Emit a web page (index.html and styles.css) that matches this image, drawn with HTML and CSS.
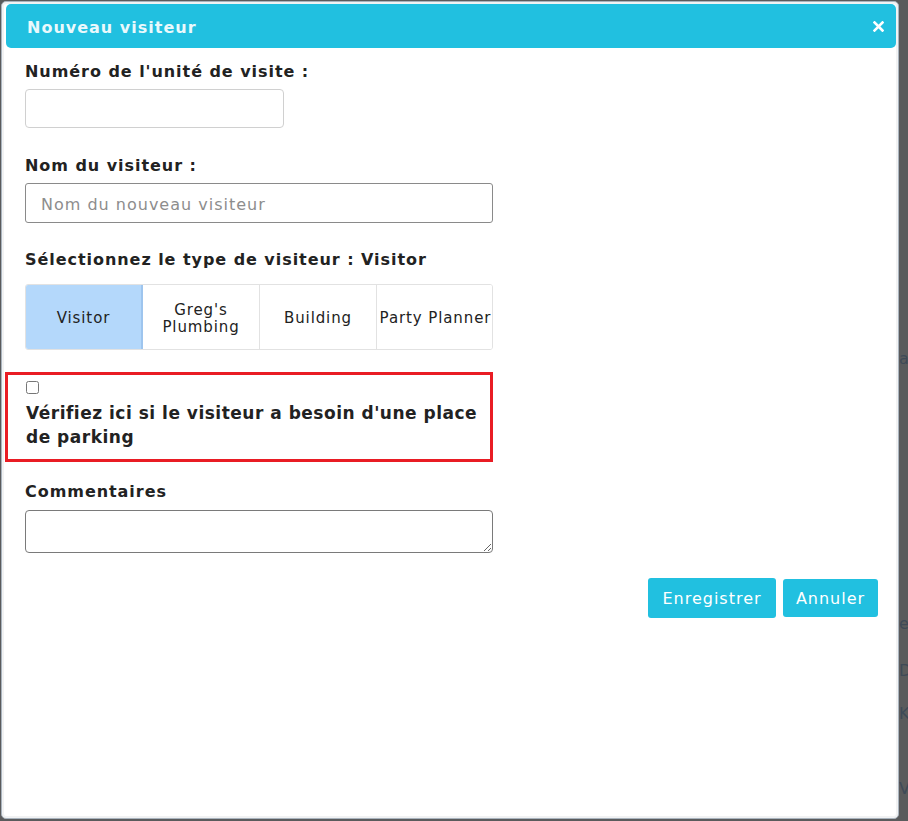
FILE: index.html
```html
<!DOCTYPE html>
<html lang="fr">
<head>
<meta charset="utf-8">
<title>Nouveau visiteur</title>
<link rel="stylesheet" href="styles.css">
</head>
<body>
<div class="page">
  <div class="dialog">
    <div class="dialog-header">
      <span class="dialog-title">Nouveau visiteur</span>
      <span class="close" aria-label="Fermer">
        <svg width="11" height="11" viewBox="0 0 11 11"><path d="M1.5 1.5 L9.5 9.5 M9.5 1.5 L1.5 9.5" stroke="#fff" stroke-width="2.6" stroke-linecap="square"/></svg>
      </span>
    </div>
    <div class="dialog-body">
      <label class="field-label label-first">Numéro de l'unité de visite :</label>
      <input class="input input-short" type="text">

      <label class="field-label label-gap">Nom du visiteur :</label>
      <input class="input input-long" type="text" placeholder="Nom du nouveau visiteur">

      <label class="field-label label-type">Sélectionnez le type de visiteur : Visitor</label>
      <div class="segments">
        <div class="segment active">Visitor</div>
        <div class="segment two-line">Greg's<br>Plumbing</div>
        <div class="segment">Building</div>
        <div class="segment">Party Planner</div>
      </div>

      <div class="highlight">
        <input class="check" type="checkbox">
        <div class="check-label">Vérifiez ici si le visiteur a besoin d'une place de parking</div>
      </div>

      <label class="field-label label-comments">Commentaires</label>
      <textarea class="textarea"></textarea>

      <div class="actions">
        <button class="btn btn-save">Enregistrer</button>
        <button class="btn btn-cancel">Annuler</button>
      </div>
    </div>
  </div>
  <div class="gutter">
    <span class="ghost g1">a</span>
    <span class="ghost g2">e</span>
    <span class="ghost g3">D</span>
    <span class="ghost g4">K</span>
    <span class="ghost g5">Va</span>
  </div>
</div>
</body>
</html>
```
FILE: styles.css
```css
html, body {
  margin: 0;
  padding: 0;
  background: #5a5b5c;
  height: 100%;
  overflow: hidden;
}

.page {
  display: flex;
  align-items: flex-start;
  padding: 1px 0 0 1px;
  font-family: "DejaVu Sans", Verdana, sans-serif;
}

.dialog {
  box-sizing: border-box;
  width: 898px;
  height: 818px;
  background: #fff;
  border: 1px solid #a9b3bd;
  border-radius: 5px;
  box-shadow: inset 0 0 0 2px #f1f2f3;
  padding: 2px 2px 3px 4px;
  flex: none;
}

.dialog-header {
  height: 44px;
  background: #21c0e0;
  border-radius: 5px;
  display: flex;
  align-items: center;
  justify-content: space-between;
  padding: 0 12px 0 21px;
}

.dialog-title {
  color: #eaf9fc;
  font-weight: bold;
  font-size: 16px;
  letter-spacing: 1px;
  margin-top: 2px;
}

.close {
  display: flex;
  margin-top: 1px;
}

.dialog-body {
  padding: 0 18px 0 19px;
  display: flex;
  flex-direction: column;
  align-items: flex-start;
  color: #222;
}

.field-label {
  display: block;
  font-weight: bold;
  font-size: 16px;
  line-height: 22px;
  letter-spacing: 0.95px;
  color: #222;
}

.label-first { margin-top: 13px; }
.label-gap { margin-top: 27px; }
.label-type { margin-top: 26px; }

.input {
  box-sizing: border-box;
  margin-top: 7px;
  font-family: "DejaVu Sans", Verdana, sans-serif;
  font-size: 16px;
  letter-spacing: 1px;
  padding: 0 15px;
  border-radius: 4px;
  background: #fff;
  outline: none;
}

.input-short {
  width: 259px;
  height: 39px;
  margin-top: 6px;
  border: 1px solid #d0d0d0;
}

.input-long {
  width: 468px;
  height: 40px;
  margin-top: 6px;
  padding-top: 2px;
  border: 1px solid #8a8a8a;
  border-radius: 3px;
}

.input-long::placeholder {
  color: #8d8d8d;
}

.segments {
  margin-top: 13px;
  display: grid;
  grid-template-columns: 117px 116px 117px 118px;
  width: 468px;
  height: 66px;
  box-sizing: border-box;
  border: 1px solid #e2e2e2;
  border-radius: 3px;
  overflow: hidden;
}

.segment {
  display: flex;
  align-items: center;
  justify-content: center;
  text-align: center;
  font-size: 15px;
  letter-spacing: 0.9px;
  line-height: 17px;
  color: #222;
  border-left: 1px solid #e2e2e2;
  background: #fff;
  padding-top: 3px;
}

.segment:first-child { border-left: none; }

.segment.active {
  background: #b4d8fb;
  border-right: 2px solid #9ec5ee;
}

.segment.active + .segment { border-left: none; }

.highlight {
  box-sizing: border-box;
  margin-top: 22px;
  margin-left: -20px;
  width: 488px;
  height: 90px;
  border: 3px solid #e91c24;
  padding: 6px 0 0 18px;
  display: flex;
  flex-direction: column;
  align-items: flex-start;
}

.check {
  width: 13px;
  height: 13px;
  margin: 0;
}

.check-label {
  margin-top: 7px;
  font-weight: bold;
  font-size: 17px;
  line-height: 24px;
  letter-spacing: 0.5px;
  color: #222;
  width: 462px;
}

.label-comments { margin-top: 19px; }

.textarea {
  box-sizing: border-box;
  margin-top: 7px;
  width: 468px;
  height: 43px;
  border: 1px solid #7a7a7a;
  border-radius: 4px;
  outline: none;
}

.actions {
  align-self: stretch;
  display: flex;
  justify-content: flex-end;
  align-items: center;
  gap: 7px;
  margin-top: 25px;
}

.btn {
  font-family: "DejaVu Sans", Verdana, sans-serif;
  font-size: 16px;
  letter-spacing: 1px;
  color: #fff;
  background: #21c0e0;
  border: none;
  border-radius: 3px;
  cursor: pointer;
}

.btn-save {
  width: 128px;
  height: 40px;
}

.btn-cancel {
  width: 95px;
  height: 38px;
}

.gutter {
  flex: 1;
  display: flex;
  flex-direction: column;
  align-items: flex-start;
  overflow: hidden;
  height: 820px;
  font-size: 16px;
  color: #3f4a57;
}

.ghost { display: block; line-height: 18px; }
.g1 { margin-top: 349px; }
.g2 { margin-top: 247px; }
.g3 { margin-top: 29px; }
.g4 { margin-top: 25px; }
.g5 { margin-top: 57px; }
```
